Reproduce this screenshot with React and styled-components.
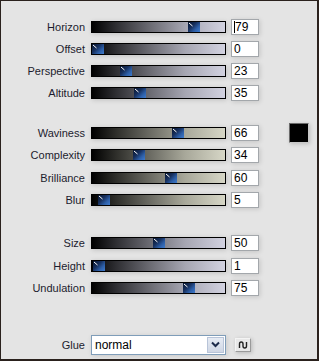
import React from "react";
import styled, { createGlobalStyle } from "styled-components";

const Global = createGlobalStyle`
  html, body { margin: 0; padding: 0; background: #e4e4e4; }
  body { font-family: "Liberation Sans", Arial, sans-serif; }
`;

const Frame = styled.div`
  width: 319px;
  height: 361px;
  box-sizing: border-box;
  background: #e4e4e4;
  border-style: solid;
  border-color: #2a211d;
  border-width: 1px 2px 2px 1px;
  padding-top: 15px;
  display: flex;
  flex-direction: column;
`;

const Group = styled.div`
  display: flex;
  flex-direction: column;
  margin-top: ${(p) => p.$gap || 0}px;
`;

const Row = styled.div`
  height: ${(p) => p.$h || 22}px;
  display: flex;
  align-items: center;
`;

const Label = styled.div`
  width: 84px;
  margin-right: 6px;
  text-align: right;
  font-size: 11px;
  color: #1c1c2e;
  white-space: nowrap;
`;

const tones = {
  cool: "linear-gradient(to right, #000 0%, #2e2e32 18%, #6e6e76 45%, #a6a6b2 70%, #d2d2e0 100%)",
  warm: "linear-gradient(to right, #000 0%, #2e2e2a 18%, #6e6e66 45%, #a8a89a 70%, #d6d6c6 100%)",
};

const Track = styled.div`
  position: relative;
  width: 135px;
  height: 12px;
  box-sizing: border-box;
  border: 1px solid #000;
  background: ${(p) => tones[p.$tone]};
  box-shadow: 1px 1px 5px rgba(0, 0, 0, 0.16);
`;

const Thumb = styled.div`
  position: absolute;
  top: 0;
  width: 12px;
  height: 10px;
  background: linear-gradient(135deg, #07142e 0%, #17305e 40%, #2d5fa8 70%, #3f7bcc 100%);
  svg { display: block; }
`;

const ValueBox = styled.div`
  position: relative;
  width: 28px;
  height: 16px;
  margin-left: 5px;
  box-sizing: border-box;
  border: 1px solid #a3a7ab;
  background: #fff;
  font-size: 12px;
  line-height: 14px;
  padding-left: 2px;
  color: #000;
  box-shadow: 1px 1px 5px rgba(0, 0, 0, 0.14);
`;

const Caret = styled.span`
  display: inline-block;
  width: 1px;
  height: 12px;
  background: #000;
  vertical-align: -2px;
  margin-right: 0px;
`;

const Swatch = styled.div`
  width: 20px;
  height: 20px;
  margin-left: 30px;
  box-sizing: border-box;
  background: #000;
  border: 1px solid #8a8a8a;
  border-top-color: #6a6a6a;
  border-left-color: #6a6a6a;
  border-bottom-color: #c8c8c8;
  border-right-color: #c8c8c8;
  box-shadow: 1px 1px 4px rgba(0, 0, 0, 0.18);
`;

const GlueRow = styled.div`
  margin-top: 35px;
  height: 20px;
  display: flex;
  align-items: center;
`;

const Select = styled.div`
  width: 135px;
  height: 20px;
  box-sizing: border-box;
  border: 1px solid #7f9db9;
  background: #fff;
  display: flex;
  align-items: stretch;
  box-shadow: 1px 1px 5px rgba(0, 0, 0, 0.12);
`;

const SelectText = styled.div`
  flex: 1;
  font-size: 12px;
  line-height: 18px;
  padding-left: 3px;
  color: #000;
`;

const DropButton = styled.div`
  width: 17px;
  margin: 1px;
  box-sizing: border-box;
  border: 1px solid #b8c4d8;
  background: linear-gradient(to bottom, #e6ebf4 0%, #cfd6e4 100%);
  display: flex;
  align-items: center;
  justify-content: center;
`;

const SmallButton = styled.div`
  width: 16px;
  height: 14px;
  margin-left: 9px;
  box-sizing: border-box;
  border: 1px solid #9a9a9a;
  border-top-color: #f4f4f4;
  border-left-color: #f4f4f4;
  background: #e8e8e8;
  display: flex;
  align-items: center;
  justify-content: center;
  box-shadow: 1px 1px 4px rgba(0, 0, 0, 0.2);
`;

const ThumbMark = () => (
  <svg width="12" height="10" viewBox="0 0 12 10">
    <line x1="1" y1="1" x2="4.5" y2="4" stroke="#fff" strokeWidth="1" />
  </svg>
);

const Slider = ({ value, tone }) => (
  <Track $tone={tone}>
    <Thumb style={{ left: `${Math.round((value / 100) * 121)}px` }}>
      <ThumbMark />
    </Thumb>
  </Track>
);

const Field = ({ label, value, tone, focused, swatch, h }) => (
  <Row $h={h}>
    <Label>{label}</Label>
    <Slider value={value} tone={tone} />
    <ValueBox>
      {focused && <Caret />}
      {value}
    </ValueBox>
    {swatch && <Swatch />}
  </Row>
);

const groupA = [
  { label: "Horizon", value: 79, focused: true },
  { label: "Offset", value: 0 },
  { label: "Perspective", value: 23 },
  { label: "Altitude", value: 35 },
];
const groupB = [
  { label: "Waviness", value: 66, swatch: true },
  { label: "Complexity", value: 34 },
  { label: "Brilliance", value: 60 },
  { label: "Blur", value: 5 },
];
const groupC = [
  { label: "Size", value: 50 },
  { label: "Height", value: 1 },
  { label: "Undulation", value: 75 },
];

export default function App() {
  return (
    <>
      <Global />
      <Frame>
        <Group>
          {groupA.map((f) => (
            <Field key={f.label} {...f} tone="cool" />
          ))}
        </Group>
        <Group $gap={18}>
          {groupB.map((f) => (
            <Field key={f.label} {...f} tone="warm" h={22.3} />
          ))}
        </Group>
        <Group $gap={21}>
          {groupC.map((f) => (
            <Field key={f.label} {...f} tone="cool" h={22.5} />
          ))}
        </Group>
        <GlueRow>
          <Label>Glue</Label>
          <Select>
            <SelectText>normal</SelectText>
            <DropButton>
              <svg width="9" height="7" viewBox="0 0 9 7">
                <path d="M1 1.5 L4.5 5 L8 1.5" fill="none" stroke="#1c2a4a" strokeWidth="2" />
              </svg>
            </DropButton>
          </Select>
          <SmallButton>
            <svg width="10" height="8" viewBox="0 0 10 8">
              <path
                d="M1.5 7 L1.5 3 Q1.5 1 3.2 1 Q5 1 5 3 L5 5 Q5 7 6.8 7 Q8.5 7 8.5 5 L8.5 1"
                fill="none"
                stroke="#222"
                strokeWidth="1.4"
              />
            </svg>
          </SmallButton>
        </GlueRow>
      </Frame>
    </>
  );
}
